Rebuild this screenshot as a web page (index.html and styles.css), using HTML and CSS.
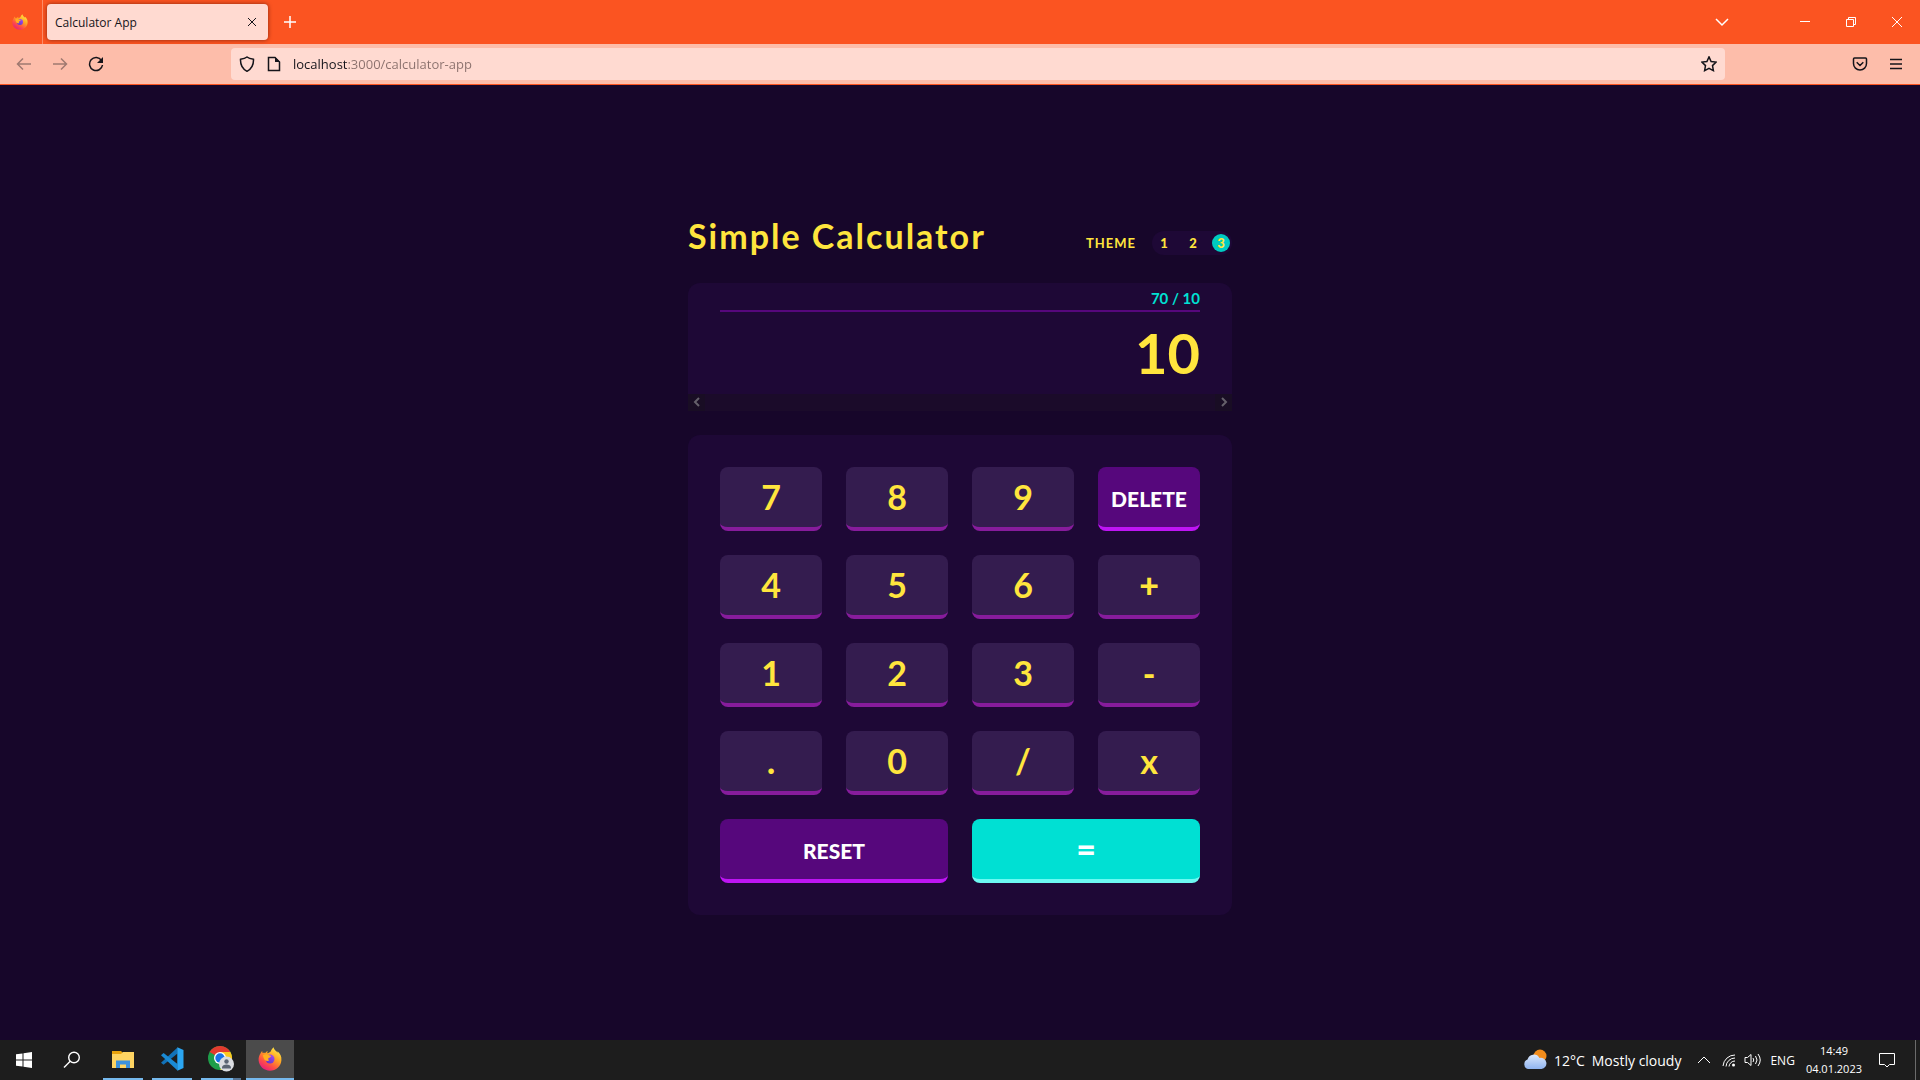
FILE: index.html
```html
<!DOCTYPE html>
<html lang="en">
<head>
<meta charset="utf-8">
<title>Calculator App</title>
<link rel="stylesheet" href="styles.css">
</head>
<body>
<svg class="defs" aria-hidden="true">
  <defs>
    <linearGradient id="fx-body" x1="0.85" y1="0" x2="0.2" y2="1">
      <stop offset="0" stop-color="#fff44f"/><stop offset="0.4" stop-color="#ffa422"/><stop offset="0.7" stop-color="#ff4f45"/><stop offset="1" stop-color="#e31587"/>
    </linearGradient>
    <linearGradient id="fx-core" x1="0.8" y1="0" x2="0.2" y2="1">
      <stop offset="0" stop-color="#a84bf0"/><stop offset="1" stop-color="#5b39c8"/>
    </linearGradient>
    <linearGradient id="cloud" x1="0" y1="0" x2="0" y2="1">
      <stop offset="0" stop-color="#dbe7fb"/><stop offset="1" stop-color="#8fb4f0"/>
    </linearGradient>
    <symbol id="firefox" viewBox="0 0 24 24">
      <path fill="url(#fx-body)" d="M2.600 6.200c.4-1 .9-1.700 1.600-2.300 0 .9.2 1.500.6 2 .8-.2 1.600-.1 2.400.1.700-1 1.500-1.600 2.600-1.900-.5.800-.6 1.500-.5 2.100 1.500-.2 2.600-.7 3.400-1.600C13.300 2.900 14.200 1.400 15.600.3c.3 1.800 1.300 2.900 2.900 4.300.5.4.8.8 1.100 1.200V4.200c2.700 2.400 4.100 5.300 3.800 9C23 19.300 18 23.700 12 23.700S.9 19.100.6 13.300C.5 10.300 1.200 8.200 2.600 6.200z"/>
      <circle cx="12" cy="12" r="4.500" fill="url(#fx-core)"/>
      <path fill="#ffb01f" d="M4.800 8.300c2-1.400 4.200-1.400 5.700-.2l2.700.9c-.2 1.200-1.700 1.700-2.700 2.100-.5.900-.2 1.800.7 2.500-2.600.9-4.900-.3-5.500-2.700z"/>
    </symbol>
  </defs>
</svg>

<header class="browser">
  <div class="tabs">
    <button class="home" aria-label="Firefox View"><svg width="16" height="16"><use href="#firefox"/></svg></button>
    <div class="tab">
      <span>Calculator App</span>
      <button aria-label="Close tab"><svg width="10" height="10" viewBox="0 0 10 10"><path d="M1 1l8 8M9 1l-8 8"/></svg></button>
    </div>
    <button class="new-tab" aria-label="New tab"><svg class="bold" width="14" height="14" viewBox="0 0 14 14"><path d="M7 1v12M1 7h12"/></svg></button>
    <div class="window-controls">
      <button aria-label="List all tabs"><svg class="bold" width="14" height="14" viewBox="0 0 14 14"><path d="M1 4l6 6 6-6"/></svg></button>
      <button aria-label="Minimize"><svg width="12" height="12" viewBox="0 0 12 12"><path d="M1 5.500h10"/></svg></button>
      <button aria-label="Restore"><svg width="12" height="12" viewBox="0 0 12 12"><path d="M1.500 3.500h7v7h-7zM3.500 3.500v-2h7v7h-2"/></svg></button>
      <button aria-label="Close"><svg width="12" height="12" viewBox="0 0 12 12"><path d="M1 1l10 10M11 1L1 11"/></svg></button>
    </div>
  </div>
  <div class="toolbar">
    <nav class="navigation">
      <button aria-label="Back" disabled><svg class="bold" width="16" height="16" viewBox="0 0 16 16"><path d="M15 8H2M7 2.500L1.500 8 7 13.500"/></svg></button>
      <button aria-label="Forward" disabled><svg class="bold" width="16" height="16" viewBox="0 0 16 16"><path d="M1 8h13M9 2.500L14.500 8 9 13.500"/></svg></button>
      <button aria-label="Reload"><svg class="bold" width="16" height="16" viewBox="0 0 16 16"><path d="M13.500 4.500A6.500 6.500 0 1 0 14.500 9"/><path class="solid" d="M15 1v6H9z"/></svg></button>
    </nav>
    <div class="address">
      <svg class="bold" width="16" height="16" viewBox="0 0 16 16"><path d="M8 1C6 2.600 3.500 3 1.500 3.300 1.300 9 3.500 13 8 15.300c4.500-2.300 6.700-6.300 6.500-12C12.500 3 10 2.600 8 1z"/></svg>
      <svg class="bold" width="16" height="16" viewBox="0 0 16 16"><path d="M3.500 1.500H9L13.500 6v8.500h-11v-13z"/><path class="solid" d="M9 1v5h5z"/></svg>
      <input type="text" aria-label="Address" value="localhost:3000/calculator-app">
      <button aria-label="Bookmark this page"><svg class="bold" width="16" height="16" viewBox="0 0 16 16"><path d="M8 .9l2.100 4.600 5 .6-3.600 3.500.9 5L8 12.300l-4.400 2.300.9-5L.9 6.100l5-.6z"/></svg></button>
    </div>
    <div class="tools">
      <button aria-label="Save to Pocket"><svg class="bold" width="16" height="16" viewBox="0 0 16 16"><path d="M2.500 2h11q1 0 1 1v4.500a6.500 6.500 0 0 1-13 0V3q0-1 1-1zM4.700 6.300L8 9.500l3.300-3.200"/></svg></button>
      <button aria-label="Menu"><svg class="bold" width="16" height="16" viewBox="0 0 16 16"><path d="M2 3.500h12M2 8h12M2 12.500h12"/></svg></button>
    </div>
  </div>
</header>

<main class="page">
  <div class="calculator">
    <div class="heading">
      <h1>Simple Calculator</h1>
      <fieldset class="theme" aria-labelledby="theme-label">
        <span id="theme-label">THEME</span>
        <div class="options">
          <label><input type="radio" name="theme" value="1">1</label>
          <label><input type="radio" name="theme" value="2">2</label>
          <label><input type="radio" name="theme" value="3" checked>3</label>
        </div>
      </fieldset>
    </div>
    <section class="display">
      <div class="readout">
        <div class="expression">70 / 10</div>
        <output class="value">10</output>
      </div>
      <div class="scrollbar">
        <button aria-label="Scroll left"><svg width="8" height="10" viewBox="0 0 8 10"><path d="M6 1L2 5l4 4"/></svg></button>
        <button aria-label="Scroll right"><svg width="8" height="10" viewBox="0 0 8 10"><path d="M2 1l4 4-4 4"/></svg></button>
      </div>
    </section>
    <section class="keypad">
      <button>7</button><button>8</button><button>9</button><button class="word">DELETE</button>
      <button>4</button><button>5</button><button>6</button><button class="sign">+</button>
      <button>1</button><button>2</button><button>3</button><button class="sign">-</button>
      <button class="sign">.</button><button>0</button><button>/</button><button>x</button>
      <button class="word wide">RESET</button><button class="sign equals wide">=</button>
    </section>
  </div>
</main>

<footer class="taskbar">
  <div class="apps">
    <button aria-label="Start"><svg width="16" height="16" viewBox="0 0 16 16"><path fill="#fff" d="M0 2.300l6.500-.9v6.100H0zM7.500 1.200L16 0v7.500H7.500zM0 8.500h6.500v6.100L0 13.700zM7.500 8.500H16V16l-8.500-1.200z"/></svg></button>
    <button aria-label="Search"><svg width="18" height="18" viewBox="0 0 18 18" fill="none" stroke="#fff" stroke-width="1.400"><circle cx="11" cy="6.500" r="5.300"/><path d="M7.200 10.300L1 16.500"/></svg></button>
    <div class="running">
      <button aria-label="File Explorer"><svg width="24" height="24" viewBox="0 0 24 24"><path fill="#e8a20c" d="M1 4h9l2 2v3H1z"/><path fill="#fed462" d="M1 7h9l2-2h11v16H1z"/><path fill="#3c92dc" d="M5 13.500h14V21h-4v-3.500H9V21H5z"/></svg></button>
      <button aria-label="Visual Studio Code"><svg width="24" height="24" viewBox="0 0 24 24"><path fill="#1272b8" d="M1 15.700L17.500.5v6L3.600 17.800z"/><path fill="#1a8ad4" d="M1 8.200l2.600-2.100L17.500 17v6.500z"/><path fill="#2ba6f2" d="M17.300.3L23.500 3v18l-6.200 2.700z"/></svg></button>
      <button class="grouped" aria-label="Google Chrome"><svg width="26" height="26" viewBox="0 0 26 26"><circle cx="12" cy="12" r="12" fill="#1e9e4a"/><path fill="#e33b2e" d="M12 12L1.600 6A12 12 0 0 1 22.400 6z"/><path fill="#fcc81f" d="M12 6h10.400A12 12 0 0 1 12 24l5.200-9z"/><circle cx="12" cy="12" r="6" fill="#fff"/><circle cx="12" cy="12" r="4.700" fill="#1a73e8"/><circle cx="18.500" cy="18" r="7.500" fill="#dadce0"/><circle cx="18.500" cy="15.500" r="2.200" fill="#5a6472"/><path fill="#5a6472" d="M14 21.500c0-4 9-4 9 0v1h-9z"/></svg></button>
    </div>
    <button class="current" aria-label="Firefox"><svg width="24" height="24"><use href="#firefox"/></svg></button>
  </div>
  <div class="tray">
    <button class="weather">
      <svg width="24" height="24" viewBox="0 0 24 24"><circle cx="17" cy="8" r="6.500" fill="#f28c1b"/><path d="M5 21a5 5 0 0 1-.5-9.500A6.500 6.500 0 0 1 16.500 10 5.600 5.600 0 1 1 18.500 21z"/></svg>
      <span>12°C</span><span>Mostly cloudy</span>
    </button>
    <button aria-label="Show hidden icons"><svg width="14" height="14" viewBox="0 0 14 14"><path d="M1 10l6-6 6 6"/></svg></button>
    <button class="network" aria-label="Network"><svg width="14" height="14" viewBox="0 0 14 14"><path d="M1 13A12 12 0 0 1 13 2M4 13.500A9 9 0 0 1 13 5M7 13.500A6 6 0 0 1 13 8"/><circle cx="11.500" cy="12" r="1.500" fill="#fff"/></svg></button>
    <button aria-label="Volume"><svg width="18" height="16" viewBox="0 0 18 16"><path d="M1 5.500h2.500L7 2.500v11l-3.500-3H1zM9 6q1.500 2 0 4M11.500 4q3 4 0 8M14 2q4.500 6 0 12"/></svg></button>
    <button class="language">ENG</button>
    <button class="clock"><span>14:49</span><span>04.01.2023</span></button>
    <button aria-label="Notifications"><svg width="18" height="18" viewBox="0 0 18 18"><path d="M1.500 2.500h15v11h-5L9 16l-2.500-2.500h-5z"/></svg></button>
  </div>
</footer>
</body>
</html>
```
FILE: styles.css
```css
* {
  box-sizing: border-box;
}

body {
  margin: 0;
  min-height: 100vh;
  display: flex;
  flex-direction: column;
  background: #17062a;
  font-family: "Open Sans", "Noto Sans", sans-serif;
}

button {
  display: flex;
  align-items: center;
  justify-content: center;
  margin: 0;
  padding: 0;
  border: 0;
  background: none;
  color: inherit;
  font: inherit;
}

.defs {
  position: absolute;
  width: 0;
  height: 0;
}

/* Browser window */

.browser path,
.scrollbar path,
.tray path {
  stroke: currentColor;
  fill: none;
}

.browser .bold {
  stroke-width: 1.5;
}

.browser .solid {
  fill: currentColor;
  stroke: none;
}

.tabs {
  display: flex;
  align-items: center;
  height: 44px;
  background: #fb5421;
  color: #fff;
}

.home {
  width: 43px;
  height: 44px;
  padding-right: 3px;
  border-right: 1px solid #fd8c68;
}

.tab {
  display: flex;
  align-items: center;
  justify-content: space-between;
  width: 221px;
  height: 36px;
  margin-left: 4px;
  padding: 0 11px 0 8px;
  border-radius: 4px;
  background: #ffdad1;
  box-shadow: 0 0 4px rgba(60, 10, 0, 0.6);
  color: #15141a;
  font-size: 12px;
}

.new-tab {
  margin-left: 15px;
}

.window-controls {
  display: flex;
  margin-left: auto;
}

.window-controls button {
  width: 46px;
  height: 44px;
}

.window-controls button:first-child {
  margin-right: 37px;
}

.toolbar {
  display: flex;
  align-items: center;
  height: 41px;
  border-bottom: 1px solid #fb5421;
  background: #fdbdaa;
  color: #15141a;
}

.navigation {
  display: flex;
  gap: 20px;
  width: 231px;
  padding-left: 16px;
}

.navigation button:disabled {
  opacity: 0.4;
}

.address {
  display: flex;
  align-items: center;
  flex: 1;
  gap: 11px;
  height: 32px;
  padding: 0 8px;
  border-radius: 4px;
  background: #ffdad1;
}

.address input {
  flex: 1;
  min-width: 0;
  padding: 0;
  border: 0;
  outline: 0;
  background: linear-gradient(to right, #15141a 55px, #8a706c 55px) text;
  color: #15141a;
  -webkit-text-fill-color: transparent;
  font: 13px/20px "Open Sans", "Noto Sans", sans-serif;
}

.tools {
  display: flex;
  justify-content: flex-end;
  gap: 20px;
  width: 195px;
  padding-right: 16px;
}

/* Calculator */

.page {
  flex: 1;
  display: flex;
  flex-direction: column;
  align-items: center;
  justify-content: center;
  padding: 24px;
  color: #ffe53d;
  font-family: Lato, "Open Sans", sans-serif;
  font-weight: 700;
}

.calculator {
  width: 100%;
  max-width: 544px;
}

.heading {
  display: flex;
  align-items: flex-end;
  justify-content: space-between;
  margin-bottom: 28px;
}

h1 {
  margin: 0;
  padding-top: 6px;
  font-size: 34px;
  line-height: 38px;
  letter-spacing: 2px;
}

.theme {
  display: flex;
  align-items: center;
  gap: 16px;
  margin: 0;
  padding: 0;
  border: 0;
  font-size: 13px;
  letter-spacing: 1px;
}

.options {
  display: flex;
  align-items: center;
  justify-content: space-between;
  width: 80px;
  height: 24px;
  padding: 0 2px;
  border-radius: 12px;
  background: #1e0836;
  font-weight: 900;
  letter-spacing: 0;
}

.options label {
  display: flex;
  align-items: center;
  justify-content: center;
  width: 20px;
  height: 18px;
  border-radius: 9px;
}

.options label:has(:checked) {
  width: 18px;
  background: #00cbc1;
}

.options input {
  position: absolute;
  opacity: 0;
  pointer-events: none;
}

.display {
  margin-bottom: 24px;
  border-radius: 12px 12px 0 0;
  background: #1e0836;
}

.readout {
  padding: 4px 32px 0;
  text-align: right;
}

.expression {
  border-bottom: 2px solid #56077c;
  color: #00e0d3;
  font-size: 15px;
  line-height: 23px;
}

.value {
  display: block;
  height: 82px;
  font-size: 56px;
  line-height: 82px;
}

.scrollbar {
  display: flex;
  justify-content: space-between;
  height: 17px;
  background: #1b0b2a;
  color: #65606a;
  stroke-width: 2;
}

.scrollbar button {
  width: 17px;
  background: #190d24;
}

.keypad {
  display: grid;
  grid-template-columns: repeat(4, 1fr);
  gap: 24px;
  padding: 32px;
  border-radius: 12px;
  background: #1e0836;
}

.keypad button {
  height: 64px;
  border-bottom: 4px solid #871c9c;
  border-radius: 8px;
  background: #341c4f;
  font-size: 34px;
}

.keypad .sign {
  font-weight: 900;
}

.keypad .word {
  padding-top: 4px;
  border-color: #be15f4;
  background: #56077c;
  color: #fff;
  font-size: 21px;
  font-weight: 900;
}

.keypad .equals {
  border-color: #6cf9f2;
  background: #00e0d3;
  color: #fff;
}

.keypad .wide {
  grid-column: span 2;
}

/* Taskbar */

.taskbar {
  display: flex;
  justify-content: space-between;
  height: 40px;
  background: #1d1d1d;
  color: #fff;
}

.apps,
.tray {
  display: flex;
}

.apps button {
  width: 48px;
  height: 40px;
}

.running {
  display: flex;
  gap: 9px;
  padding: 0 5px 0 7px;
}

.apps .running button {
  width: 40px;
  border-bottom: 2px solid #76b9ed;
}

.running .grouped {
  border-image: linear-gradient(to right, #76b9ed 31px, #567595 31px) 2;
}

.apps .current {
  border-bottom: 2px solid #76b9ed;
  background: #4b4b4b;
}

.tray {
  padding-right: 19px;
  border-right: 1px solid #6b6b6b;
  margin-right: 4px;
}

.tray button {
  margin-left: 8px;
}

.tray .weather {
  gap: 7px;
  margin-right: 8px;
  font-size: 14px;
}

.weather svg path {
  fill: url(#cloud);
  stroke: none;
}

.tray .network {
  margin-left: 11px;
}

.language {
  font-size: 12px;
}

.tray .clock {
  flex-direction: column;
  margin: 0 8px 0 11px;
  font-size: 11px;
  line-height: 18px;
}
```
